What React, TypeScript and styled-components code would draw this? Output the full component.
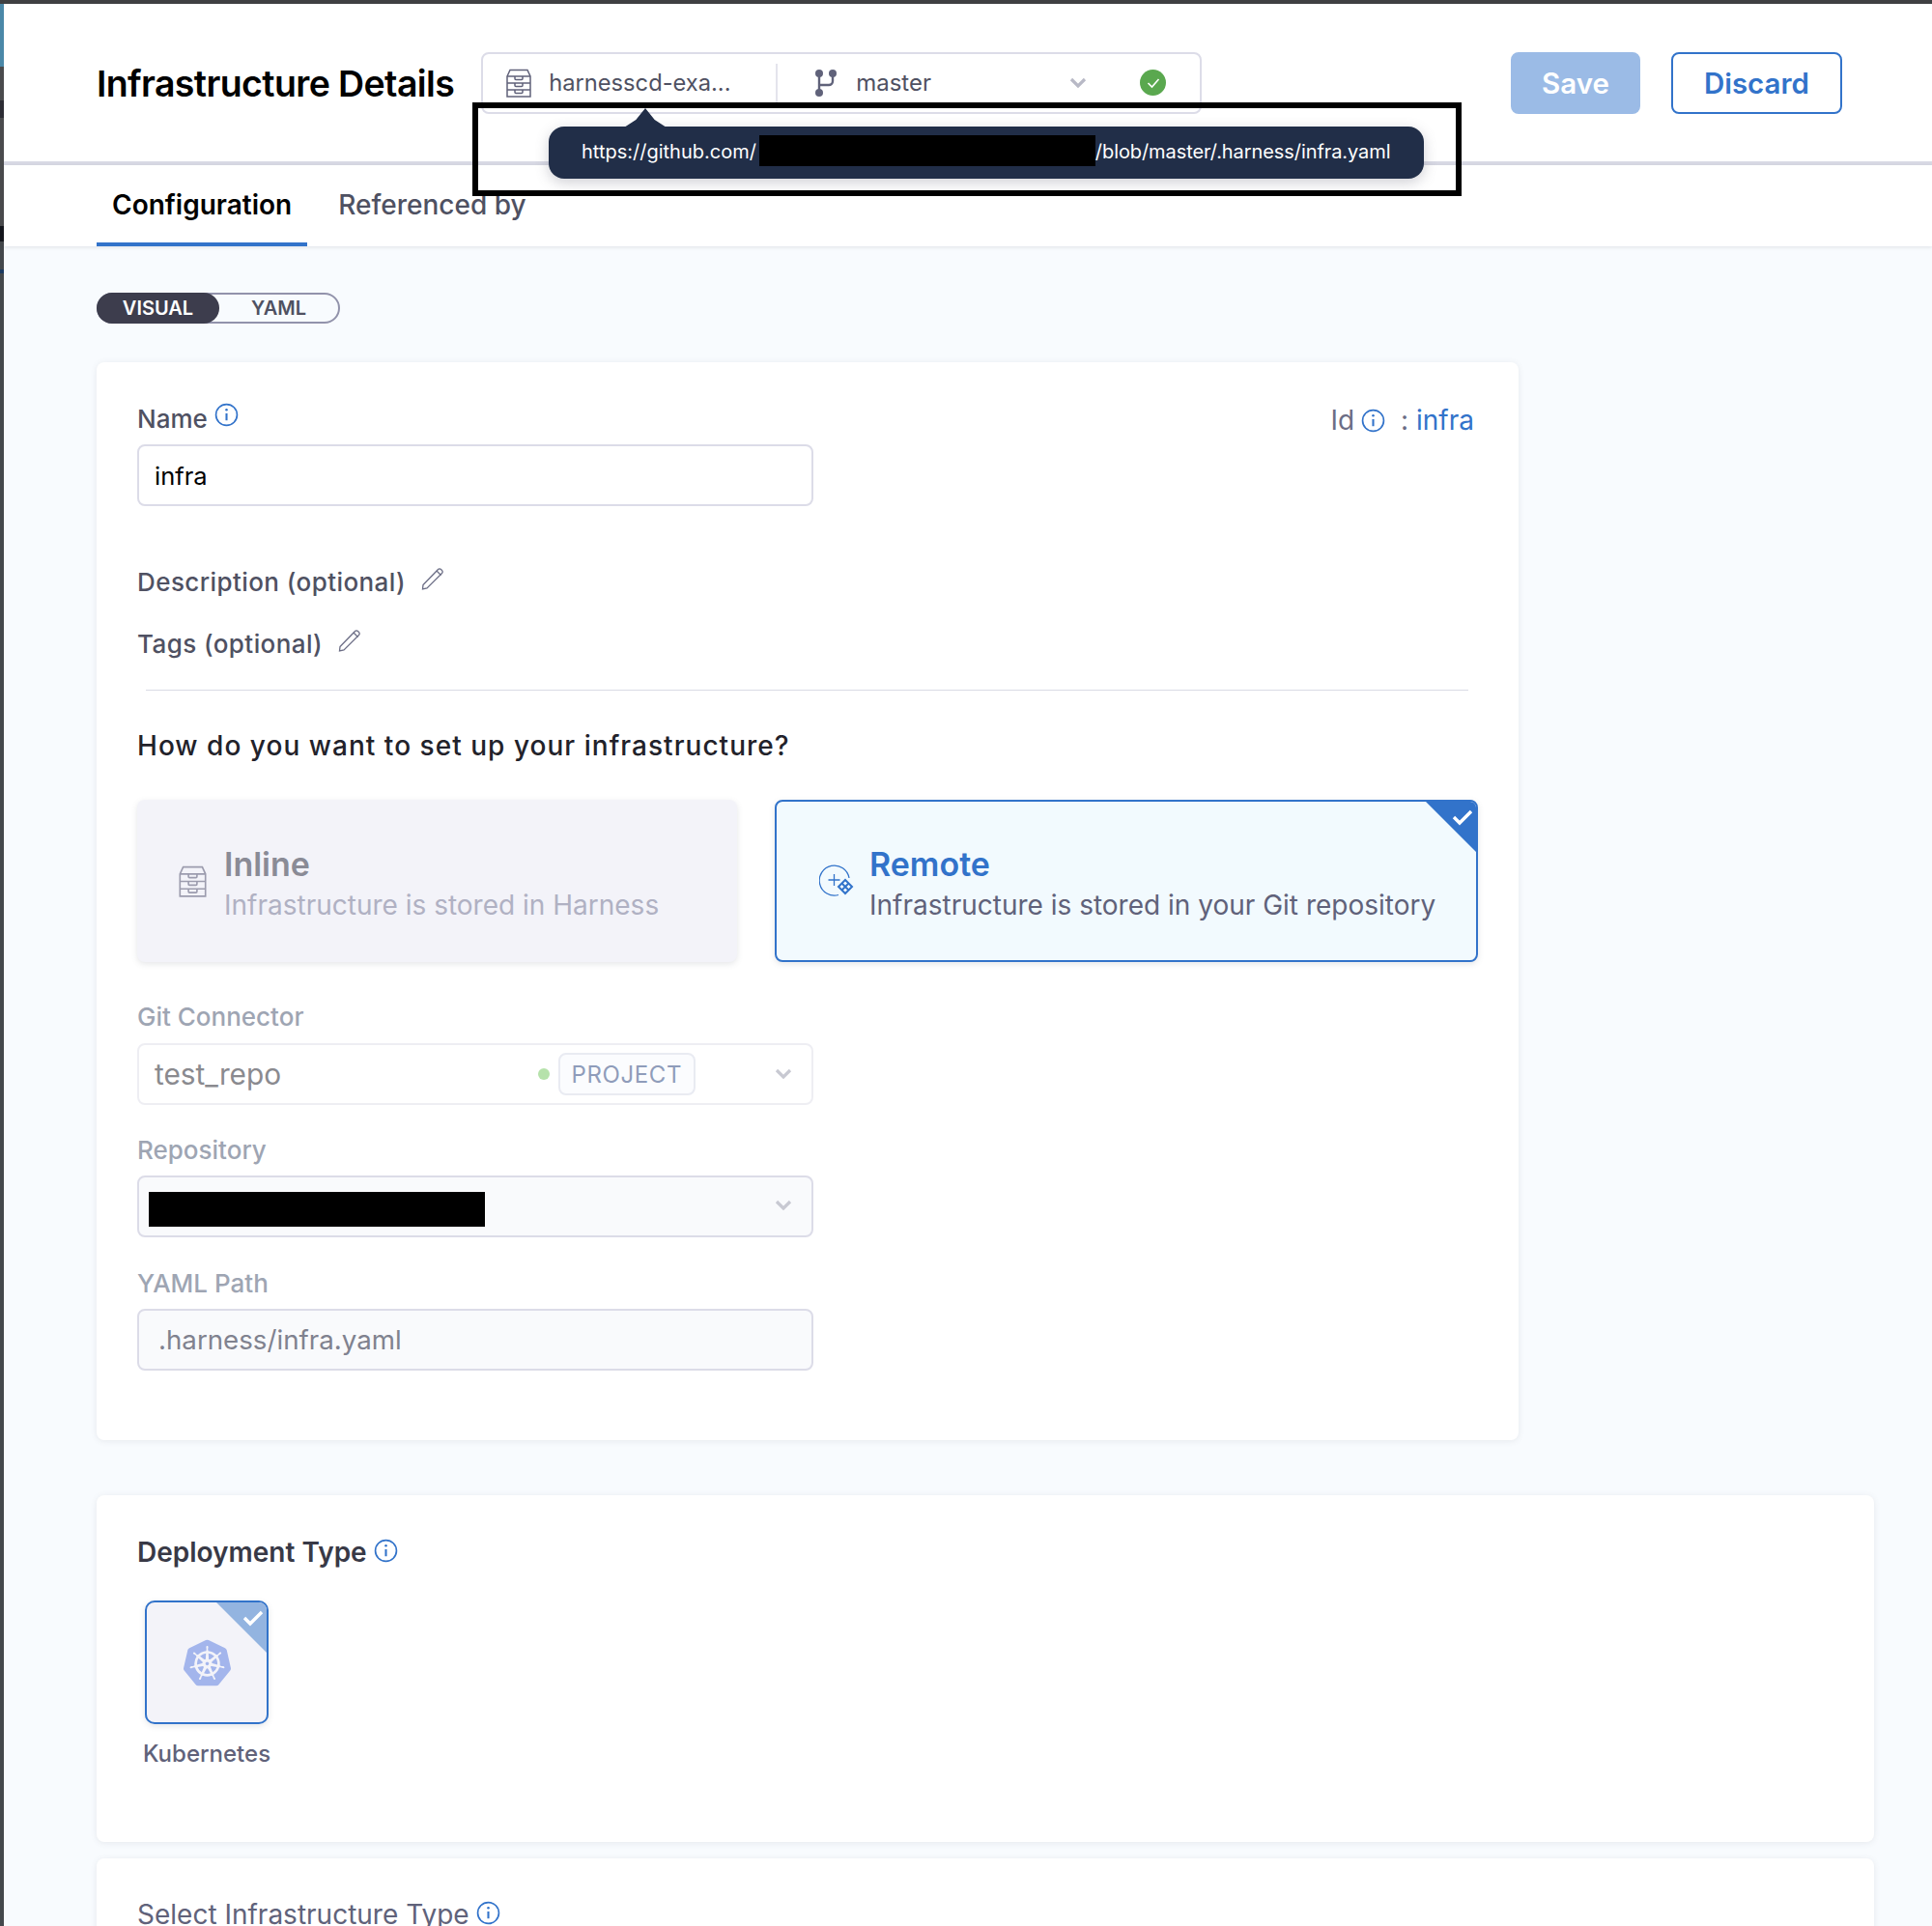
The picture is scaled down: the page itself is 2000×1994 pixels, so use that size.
import React from "react";
import styled, { createGlobalStyle } from "styled-components";
import { SiKubernetes } from "react-icons/si";

const GlobalStyle = createGlobalStyle`
  html, body {
    margin: 0;
    padding: 0;
    background: #f8fbfe;
  }
  #root {
    width: 2000px;
    height: 1994px;
    overflow: hidden;
  }
  * {
    box-sizing: border-box;
  }
`;

const Page = styled.div`
  position: relative;
  display: flex;
  height: 1994px;
  font-family: Inter, "Noto Sans", sans-serif;
  color: #4f5162;
`;

const EdgeStrip = styled.div`
  width: 4px;
  flex: none;
  display: flex;
  flex-direction: column;
  background: #44484c;
`;

const EdgeBit = styled.div<{ $h: number; $c: string }>`
  height: ${(p) => p.$h}px;
  background: ${(p) => p.$c};
`;

const Main = styled.div`
  flex: 1;
  min-width: 0;
`;

const TopBar = styled.div`
  height: 4px;
  background: #3f4042;
`;

const Header = styled.header`
  height: 167px;
  padding: 0 93px 0 96px;
  display: flex;
  align-items: center;
  background: #fff;
  border-bottom: 4px solid #d9dae5;
`;

const Title = styled.h1`
  margin: 2px 0 0;
  font-size: 37.5px;
  font-weight: 600;
  letter-spacing: -0.62px;
  color: #000;
  white-space: nowrap;
`;

const GitBox = styled.div`
  width: 746px;
  height: 64px;
  margin-left: 28px;
  display: flex;
  align-items: center;
  border: 2px solid #dcdce8;
  border-radius: 8px;
`;

const GitRepo = styled.div`
  width: 305px;
  height: 40px;
  padding-left: 24px;
  display: flex;
  align-items: center;
  gap: 18px;
  border-right: 2px solid #e4e4ec;
  font-size: 23.7px;
  color: #4f5162;
`;

const GitBranch = styled.div`
  flex: 1;
  padding-left: 38px;
  display: flex;
  align-items: center;
  gap: 19px;
  font-size: 24px;
  color: #4f5162;
`;

const StatusDot = styled.span`
  width: 27px;
  height: 27px;
  margin: 0 35px 0 36px;
  display: flex;
  align-items: center;
  justify-content: center;
  flex: none;
  border-radius: 50%;
  background: #5aa84f;
`;

const Spacer = styled.div`
  flex: 1;
`;

const Button = styled.button<{ $outline?: boolean }>`
  height: 64px;
  padding: 0 ${(p) => (p.$outline ? "32px" : "30px")};
  border-radius: 8px;
  border: 2px solid ${(p) => (p.$outline ? "#3273ca" : "#9bbbe6")};
  background: ${(p) => (p.$outline ? "#fff" : "#9bbbe6")};
  color: ${(p) => (p.$outline ? "#3273ca" : "#fff")};
  font-family: inherit;
  font-size: 29.5px;
  font-weight: 600;
  margin-left: ${(p) => (p.$outline ? "32px" : "0")};
`;

const TabBar = styled.nav`
  height: 84px;
  padding-left: 96px;
  display: flex;
  gap: 32px;
  background: #fff;
  box-shadow: 0 1px 4px rgba(40, 41, 61, 0.12);
`;

const Tab = styled.div<{ $active?: boolean }>`
  padding: 2px 16px 0;
  margin-left: ${(p) => (p.$active ? "0" : "-16px")};
  display: flex;
  align-items: center;
  font-size: 28px;
  font-weight: ${(p) => (p.$active ? 600 : 500)};
  color: ${(p) => (p.$active ? "#000" : "#4f5162")};
  border-bottom: 4px solid ${(p) => (p.$active ? "#3273ca" : "transparent")};
`;

const Body = styled.div`
  padding: 48px 0 0 96px;
`;

const Toggle = styled.div`
  width: 252px;
  height: 32px;
  display: flex;
  align-items: center;
  border: 2px solid #9293ab;
  border-radius: 16px;
  font-size: 20px;
  font-weight: 600;
`;

const ToggleOn = styled.div`
  width: 127px;
  height: 32px;
  margin-left: -2px;
  display: flex;
  align-items: center;
  justify-content: center;
  border-radius: 16px;
  background: #3d3d4d;
  color: #fff;
`;

const ToggleOff = styled.div`
  flex: 1;
  text-align: center;
  color: #4f5162;
`;

const Card = styled.section<{ $w: number; $top: number }>`
  width: ${(p) => p.$w}px;
  margin-top: ${(p) => p.$top}px;
  background: #fff;
  border-radius: 8px;
  box-shadow: 0 1px 6px rgba(96, 97, 112, 0.12);
`;

const FormCard = styled(Card)`
  padding: 42px 42px 72px;
`;

const DeployCard = styled(Card)`
  padding: 43px 42px 75px;
`;

const SelectCard = styled(Card)`
  padding: 42px 42px 60px;
`;

const Row = styled.div<{ $top?: number }>`
  height: 32px;
  margin-top: ${(p) => p.$top ?? 0}px;
  display: flex;
  align-items: center;
`;

const Label = styled.span<{ $muted?: boolean; $spaced?: boolean }>`
  font-size: 26px;
  font-weight: 500;
  letter-spacing: ${(p) => (p.$spaced ? "0.42px" : "0")};
  color: ${(p) => (p.$muted ? "#9ea5b3" : "#4f5162")};
  white-space: nowrap;
`;

const SectionLabel = styled.span<{ $strong?: boolean }>`
  font-size: 28px;
  font-weight: ${(p) => (p.$strong ? 600 : 400)};
  color: ${(p) => (p.$strong ? "#383946" : "#60627a")};
  white-space: nowrap;
`;

const IdGroup = styled.div`
  margin-left: auto;
  padding: 4px 4px 0 0;
  display: flex;
  align-items: center;
  font-size: 28px;
  color: #6b6d85;
`;

const IdColon = styled.span`
  color: #6b6d85;
`;

const IdValue = styled.span`
  margin-left: 8px;
  color: #3273ca;
`;

const Field = styled.div<{ $top: number; $bg?: string; $border?: string; $text?: string; $fs?: number; $pad?: number }>`
  width: 700px;
  height: 64px;
  margin-top: ${(p) => p.$top}px;
  padding: 0 20px 0 ${(p) => p.$pad ?? 16}px;
  display: flex;
  align-items: center;
  border: 2px solid ${(p) => p.$border ?? "#dcdce8"};
  border-radius: 8px;
  background: ${(p) => p.$bg ?? "#fff"};
  color: ${(p) => p.$text ?? "#000"};
  font-size: ${(p) => p.$fs ?? 27}px;
`;

const Redacted = styled.div`
  width: 348px;
  height: 36px;
  margin: 6px 0 0 -6px;
  background: #000;
`;

const Divider = styled.hr`
  height: 1px;
  margin: 32px 10px 0 9px;
  border: 0;
  background: #d9dae5;
`;

const Question = styled.h3`
  margin: 39px 0 0;
  font-size: 28px;
  line-height: 36px;
  font-weight: 500;
  letter-spacing: 1.03px;
  color: #22222a;
`;

const Options = styled.div`
  margin-top: 38px;
  display: grid;
  grid-template-columns: 621px 728px;
  gap: 39px;
`;

const Option = styled.div<{ $selected?: boolean }>`
  position: relative;
  height: 168px;
  padding-left: ${(p) => (p.$selected ? "44px" : "43px")};
  display: flex;
  align-items: center;
  gap: ${(p) => (p.$selected ? "16px" : "18px")};
  overflow: hidden;
  border-radius: 8px;
  border: ${(p) => (p.$selected ? "2px solid #3273ca" : "0")};
  background: ${(p) => (p.$selected ? "#f2fafe" : "#f3f3f9")};
  box-shadow: 0 2px 6px rgba(96, 97, 112, 0.16);
`;

const OptionText = styled.div`
  padding-top: 6px;
  display: flex;
  flex-direction: column;
  gap: 4px;
`;

const OptionTitle = styled.div<{ $selected?: boolean }>`
  font-size: 34px;
  line-height: 40px;
  font-weight: 600;
  color: ${(p) => (p.$selected ? "#3273ca" : "#8a8b96")};
`;

const OptionSub = styled.div<{ $selected?: boolean }>`
  font-size: 28px;
  line-height: 36px;
  color: ${(p) => (p.$selected ? "#60627a" : "#b0b1c3")};
  white-space: nowrap;
`;

const Corner = styled.div<{ $soft?: boolean }>`
  position: absolute;
  top: 0;
  right: 0;
  width: 52px;
  height: 52px;
  background: ${(p) => (p.$soft ? "#93b4e0" : "#3273ca")};
  clip-path: polygon(0 0, 100% 0, 100% 100%);
`;

const CornerCheck = styled.svg`
  position: absolute;
  top: 7px;
  right: 3px;
  width: 22px;
  height: 18px;
`;

const Dot = styled.span`
  width: 12px;
  height: 12px;
  margin-right: 9px;
  border-radius: 50%;
  background: #b6e2ab;
`;

const ScopeTag = styled.span`
  height: 44px;
  padding: 0 12px;
  display: flex;
  align-items: center;
  border: 2px solid #e9ebf2;
  border-radius: 8px;
  background: #fbfcfe;
  color: #8f9cba;
  font-size: 24px;
  letter-spacing: 0.6px;
`;

const ChevronWrap = styled.span<{ $left?: number; $up?: number }>`
  margin-left: ${(p) => p.$left ?? 0}px;
  margin-top: ${(p) => -(p.$up ?? 0)}px;
  display: flex;
`;

const TileColumn = styled.div`
  width: 144px;
  margin-top: 34px;
  display: flex;
  flex-direction: column;
  align-items: center;
`;

const Tile = styled.div`
  position: relative;
  width: 128px;
  height: 128px;
  display: flex;
  align-items: center;
  justify-content: center;
  overflow: hidden;
  border: 2px solid #3273ca;
  border-radius: 10px;
  background: #f3f3f9;
  box-shadow: 0 2px 6px rgba(96, 97, 112, 0.16);
  color: #a3b5ec;
`;

const TileLabel = styled.div`
  margin-top: 15px;
  font-size: 24px;
  line-height: 32px;
  font-weight: 500;
  color: #60627a;
  white-space: nowrap;
`;

const CalloutFrame = styled.div`
  position: absolute;
  left: 489px;
  top: 106px;
  width: 1024px;
  height: 97px;
  border: 6px solid #000;
  pointer-events: none;
`;

const Tooltip = styled.div`
  position: absolute;
  left: 568px;
  top: 131px;
  width: 906px;
  height: 54px;
  padding: 0 0 3px 34px;
  display: flex;
  align-items: center;
  border-radius: 16px;
  background: #212e48;
  color: #fff;
  font-size: 20px;
  white-space: nowrap;
  box-shadow: 0 4px 14px rgba(96, 97, 112, 0.3);
`;

const TooltipArrow = styled.div`
  position: absolute;
  left: 78px;
  top: -19px;
  width: 44px;
  height: 20px;
  background: #212e48;
  clip-path: polygon(50% 0, 72% 60%, 100% 100%, 0 100%, 28% 60%);
`;

const TooltipRedaction = styled.span`
  width: 348px;
  height: 32px;
  margin: 0 0 1px 3px;
  background: #000;
`;

const TooltipPath = styled.span`
  letter-spacing: -0.08px;
`;

const InfoSvg = styled.svg<{ $raise?: number }>`
  width: 25px;
  height: 25px;
  margin-left: 7px;
  margin-top: ${(p) => -(p.$raise ?? 0)}px;
  flex: none;
`;

const InfoIcon = ({ raise }: { raise?: number }) => (
  <InfoSvg $raise={raise} viewBox="0 0 24 24" fill="none" stroke="#3273ca" strokeWidth="1.6">
    <circle cx="12" cy="12" r="10.5" />
    <path d="M12 10.5v7" strokeWidth="2" />
    <circle cx="12" cy="7" r="1.2" fill="#3273ca" stroke="none" />
  </InfoSvg>
);

const PencilSvg = styled.svg`
  width: 24px;
  height: 24px;
  margin: -7px 0 0 16px;
`;

const PencilIcon = () => (
  <PencilSvg viewBox="0 0 24 24" fill="none" stroke="#6b6d85" strokeWidth="1.3">
    <path d="M2 18.5 17.5 2.5a2 2 0 0 1 3 0l1 1a2 2 0 0 1 0 3L6 22l-4.5 1z" />
    <path d="M16 4l4.5 4.5" />
  </PencilSvg>
);

const CabinetIcon = ({ color, w = 26, h = 30 }: { color: string; w?: number; h?: number }) => (
  <svg width={w} height={h} viewBox="0 0 26 30" fill="none" stroke={color} strokeWidth="1.5" style={{ flex: "none" }}>
    <path d="M1 8 4 1.5h18L25 8v21H1z" />
    <path d="M1 8h24M1 15h24M1 22h24" />
    <path d="M9 8v2.5a1 1 0 0 0 1 1h6a1 1 0 0 0 1-1V8M9 15v2.5a1 1 0 0 0 1 1h6a1 1 0 0 0 1-1V15M9 22v2.5a1 1 0 0 0 1 1h6a1 1 0 0 0 1-1V22" />
  </svg>
);

const BranchIcon = () => (
  <svg width="24" height="30" viewBox="0 0 24 30" fill="#60627a" stroke="#60627a" style={{ flex: "none" }}>
    <circle cx="5" cy="5" r="4" stroke="none" />
    <circle cx="19" cy="5" r="4" stroke="none" />
    <circle cx="5" cy="25" r="4" stroke="none" />
    <path d="M5 5v20M5 17h10a4 4 0 0 0 4-4V5" fill="none" strokeWidth="2.4" />
  </svg>
);

const Chevron = ({ color }: { color: string }) => (
  <svg width="18" height="11" viewBox="0 0 18 11" fill="none" stroke={color} strokeWidth="3.2">
    <path d="M2 2l7 7 7-7" />
  </svg>
);

const RemoteIcon = () => (
  <svg width="36" height="34" viewBox="0 0 36 34" fill="none" stroke="#3273ca" strokeWidth="1.3" style={{ flex: "none" }}>
    <path d="M20 31.5A15.5 15.5 0 1 1 31 14" />
    <path d="M15.5 10v12M9.5 16h12" />
    <g strokeWidth="2">
      <path d="M27 16l7 7-7 7-7-7z" />
      <path d="M23.5 19.5l7 7M30.5 19.5l-7 7" />
    </g>
  </svg>
);

const Check = () => (
  <CornerCheck viewBox="0 0 22 18" fill="none" stroke="#fff" strokeWidth="3.4">
    <path d="M2 9l6 6L20 3" />
  </CornerCheck>
);

export default function App() {
  return (
    <Page>
      <GlobalStyle />
      <EdgeStrip>
        <EdgeBit $h={4} $c="#3f4042" />
        <EdgeBit $h={65} $c="#4b88a8" />
        <EdgeBit $h={35} $c="#4a4b4d" />
        <EdgeBit $h={18} $c="#2c2c34" />
        <EdgeBit $h={112} $c="#4a4b4d" />
        <EdgeBit $h={16} $c="#14161c" />
        <EdgeBit $h={29} $c="#44484c" />
        <EdgeBit $h={4} $c="#1b3a60" />
      </EdgeStrip>
      <Main>
        <TopBar />
        <Header>
          <Title>Infrastructure Details</Title>
          <GitBox>
            <GitRepo>
              <CabinetIcon color="#60627a" />
              harnesscd-exa...
            </GitRepo>
            <GitBranch>
              <BranchIcon />
              master
              <Spacer />
              <Chevron color="#b8b9c6" />
              <StatusDot>
                <svg width="14" height="12" viewBox="0 0 14 12" fill="none" stroke="#fff" strokeWidth="1.6">
                  <path d="M1.5 6l4 4 7-8" />
                </svg>
              </StatusDot>
            </GitBranch>
          </GitBox>
          <Spacer />
          <Button>Save</Button>
          <Button $outline>Discard</Button>
        </Header>
        <TabBar>
          <Tab $active>Configuration</Tab>
          <Tab>Referenced by</Tab>
        </TabBar>
        <Body>
          <Toggle>
            <ToggleOn>VISUAL</ToggleOn>
            <ToggleOff>YAML</ToggleOff>
          </Toggle>

          <FormCard $w={1472} $top={40}>
            <Row>
              <Label>Name</Label>
              <InfoIcon raise={7} />
              <IdGroup>
                Id
                <InfoIcon />
                <IdValue>
                  <IdColon>&nbsp;:</IdColon> infra
                </IdValue>
              </IdGroup>
            </Row>
            <Field $top={11} $fs={25.5} $pad={16}>
              infra
            </Field>
            <Row $top={62}>
              <Label $spaced>Description (optional)</Label>
              <PencilIcon />
            </Row>
            <Row $top={32}>
              <Label $spaced>Tags (optional)</Label>
              <PencilIcon />
            </Row>
            <Divider />
            <Question>How do you want to set up your infrastructure?</Question>
            <Options>
              <Option>
                <CabinetIcon color="#9c9cae" w={29} h={33} />
                <OptionText>
                  <OptionTitle>Inline</OptionTitle>
                  <OptionSub>Infrastructure is stored in Harness</OptionSub>
                </OptionText>
              </Option>
              <Option $selected>
                <RemoteIcon />
                <OptionText>
                  <OptionTitle $selected>Remote</OptionTitle>
                  <OptionSub $selected>Infrastructure is stored in your Git repository</OptionSub>
                </OptionText>
                <Corner />
                <Check />
              </Option>
            </Options>
            <Row $top={40}>
              <Label $muted>Git Connector</Label>
            </Row>
            <Field $top={12} $border="#eeeef3" $text="#8a8a8f" $fs={29.8}>
              test_repo
              <Spacer />
              <Dot />
              <ScopeTag>PROJECT</ScopeTag>
              <ChevronWrap $left={82} $up={1}>
                <Chevron color="#c8c9d2" />
              </ChevronWrap>
            </Field>
            <Row $top={30}>
              <Label $muted>Repository</Label>
            </Row>
            <Field $top={11} $bg="#f9fafc">
              <Redacted />
              <Spacer />
              <ChevronWrap $up={4}>
                <Chevron color="#c8c9d2" />
              </ChevronWrap>
            </Field>
            <Row $top={31}>
              <Label $muted>YAML Path</Label>
            </Row>
            <Field $top={11} $bg="#f9fafc" $text="#80828f" $fs={27.7} $pad={20}>
              .harness/infra.yaml
            </Field>
          </FormCard>

          <DeployCard $w={1840} $top={57}>
            <Row>
              <SectionLabel $strong>Deployment Type</SectionLabel>
              <InfoIcon raise={3} />
            </Row>
            <TileColumn>
              <Tile>
                <SiKubernetes size={49} />
                <Corner $soft />
                <Check />
              </Tile>
              <TileLabel>Kubernetes</TileLabel>
            </TileColumn>
          </DeployCard>

          <SelectCard $w={1840} $top={17}>
            <Row>
              <SectionLabel>Select Infrastructure Type</SectionLabel>
              <InfoIcon raise={3} />
            </Row>
          </SelectCard>
        </Body>
      </Main>

      <Tooltip>
        <TooltipArrow />
        https://github.com/
        <TooltipRedaction />
        <TooltipPath>/blob/master/.harness/infra.yaml</TooltipPath>
      </Tooltip>
      <CalloutFrame />
    </Page>
  );
}
